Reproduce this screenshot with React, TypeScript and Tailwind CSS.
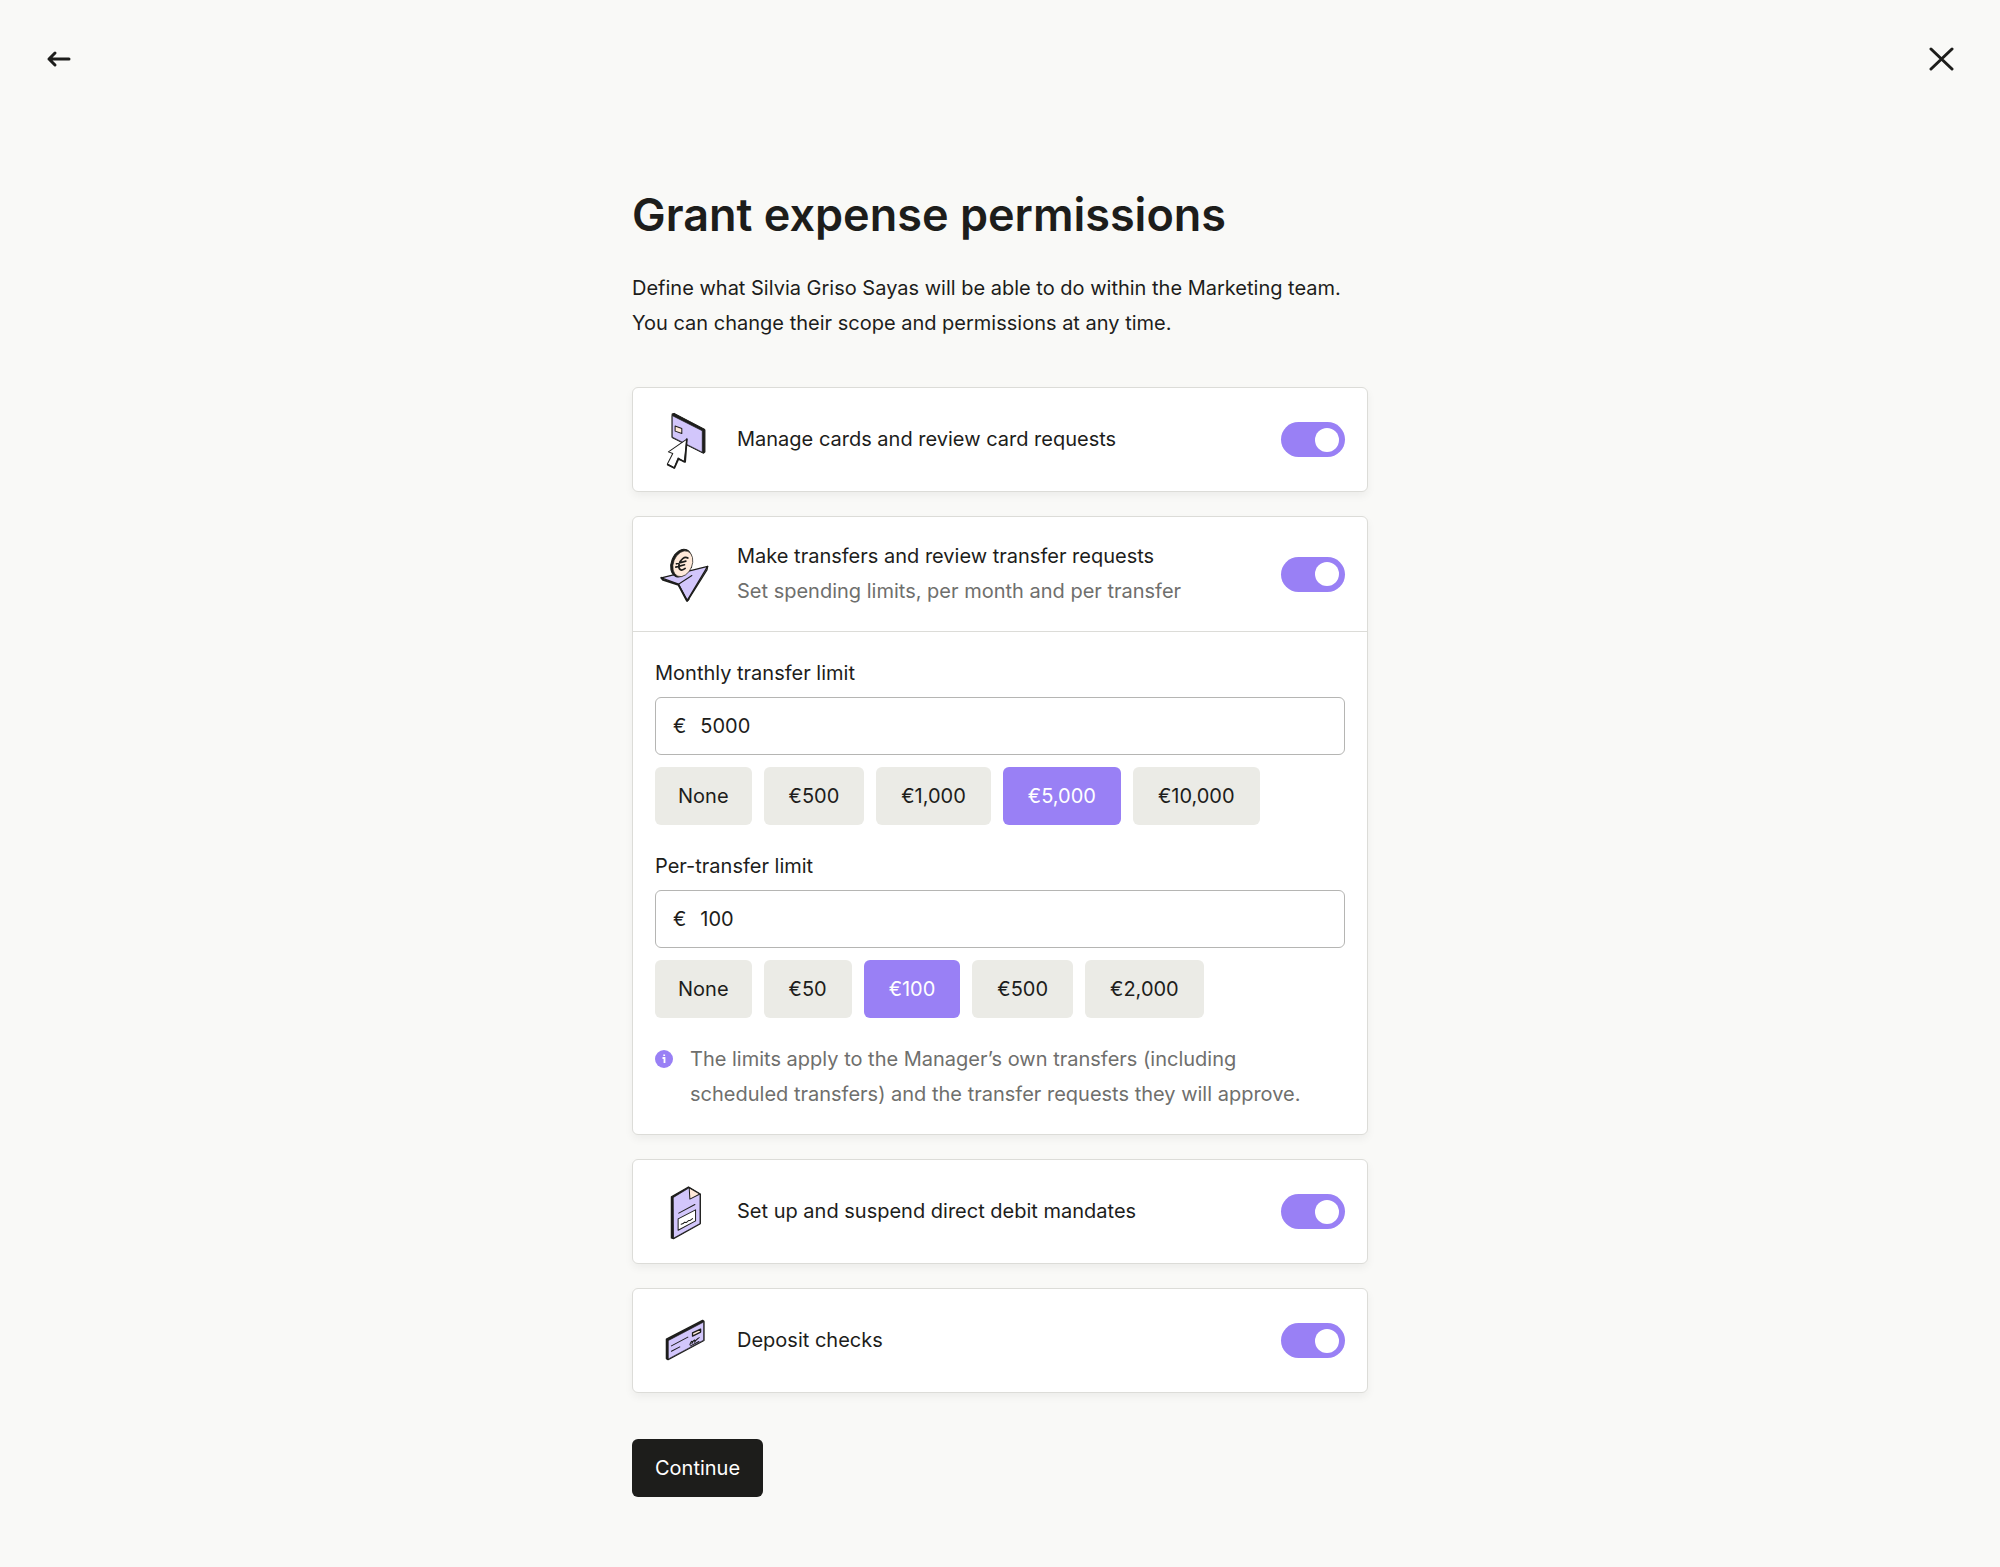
import { useState } from "react";
import type { ReactNode } from "react";

const monthlyOptions = [
    { label: "None", value: "" },
    { label: "€500", value: "500" },
    { label: "€1,000", value: "1000" },
    { label: "€5,000", value: "5000" },
    { label: "€10,000", value: "10000" },
]

const transferOptions = [
    { label: "None", value: "" },
    { label: "€50", value: "50" },
    { label: "€100", value: "100" },
    { label: "€500", value: "500" },
    { label: "€2,000", value: "2000" },
]

/***************** Illustrations ************/
function CardIcon() {
    return (
        <svg className="size-[59px] shrink-0" viewBox="0 0 176 176" fill="none" strokeLinejoin="round" strokeLinecap="round" aria-hidden="true">
            <path d="M51 12 57 10 147 57 149 60V125L145 129 51 82Z" fill="#1d1d1b" stroke="#1d1d1b" strokeWidth="3" />
            <path d="M52 17 141 62V126L52 81Z" fill="#d2c6fb" stroke="#1d1d1b" strokeWidth="2" />
            <path d="M60 48 80 55V70L60 63Z" fill="#ffe9d9" stroke="#1d1d1b" strokeWidth="3" />
            <path d="M95 87 40 125 53 130 37 161 57 173 69 143 87 155Z" fill="#fff" stroke="#1d1d1b" strokeWidth="3" />
            <path d="M95 87 90 155 70 146 58 173 38 163" stroke="#1d1d1b" strokeWidth="5" />
        </svg>
    )
}

function TransferIcon() {
    return (
        <svg className="size-[59px] shrink-0" viewBox="0 0 176 176" fill="none" strokeLinejoin="round" strokeLinecap="round" aria-hidden="true">
            <path d="M19 98 157 64 96 166 70 117Z" fill="#d2c6fb" stroke="#1d1d1b" strokeWidth="4" />
            <path d="M19 98 24 104 70 119 95 166 100 162" stroke="#1d1d1b" strokeWidth="6" />
            <path d="M70 117 110 91" stroke="#1d1d1b" strokeWidth="3" />
            <path d="M157 64 155 74 97 167" stroke="#1d1d1b" strokeWidth="4" />
            <ellipse cx="78" cy="54" rx="29" ry="43" transform="rotate(22 78 54)" fill="#1d1d1b" stroke="#1d1d1b" strokeWidth="3" />
            <ellipse cx="83" cy="56" rx="28" ry="40" transform="rotate(22 83 56)" fill="#ffe9d9" stroke="#1d1d1b" strokeWidth="2" />
            <path d="M98 39C88 33 76 43 72 57C68 73 78 80 90 70M64 56 92 48M62 66 88 59" stroke="#1d1d1b" strokeWidth="5" />
        </svg>
    )
}

function MandateIcon() {
    return (
        <svg className="size-[59px] shrink-0" viewBox="0 0 176 176" fill="none" strokeLinejoin="round" strokeLinecap="round" aria-hidden="true">
            <path d="M49 44 100 15 135 36V124L55 169 49 167Z" fill="#1d1d1b" stroke="#1d1d1b" strokeWidth="4" />
            <path d="M55 46 101 18 134 37V124L56 167Z" fill="#d2c6fb" stroke="#1d1d1b" strokeWidth="2" />
            <path d="M102 17 104 51 134 36Z" fill="#ffe9d9" stroke="#1d1d1b" strokeWidth="3" />
            <path d="M71 93 119 67" stroke="#1d1d1b" strokeWidth="3" />
            <path d="M69 110 121 83V116L69 144Z" fill="#fff" stroke="#1d1d1b" strokeWidth="3" />
            <path d="M78 126 84 124 88 120 93 121 100 115 104 115 112 109" stroke="#1d1d1b" strokeWidth="3" />
        </svg>
    )
}

function CheckIcon() {
    return (
        <svg className="size-[59px] shrink-0" viewBox="0 0 176 176" fill="none" strokeLinejoin="round" strokeLinecap="round" aria-hidden="true">
            <path d="M34 84 142 28 146 31V88L39 145 34 142Z" fill="#1d1d1b" stroke="#1d1d1b" strokeWidth="4" />
            <path d="M40 88 145 33V87L40 143Z" fill="#d2c6fb" stroke="#1d1d1b" strokeWidth="2" />
            <path d="M49 104 98 78M49 120 74 107" stroke="#1d1d1b" strokeWidth="3" />
            <path d="M112 65 136 54V63L112 75Z" fill="#ffe9d9" stroke="#1d1d1b" strokeWidth="4" />
            <path d="M104 101C108 86 114 88 110 97C117 84 121 84 118 93C124 83 128 83 132 79M106 104 131 91" stroke="#1d1d1b" strokeWidth="3" />
        </svg>
    )
}

/***************** Controls ************/
function Toggle({ id }: { id: string }) {
    const [on, setOn] = useState(true)

    return (
        <input
            id={id}
            type="checkbox"
            role="switch"
            checked={on}
            onChange={(e) => { setOn(e.target.checked) }}
            className="flex h-[35px] w-16 shrink-0 cursor-pointer appearance-none items-center rounded-full bg-[#c4c4c0] px-[6px] before:size-6 before:rounded-full before:bg-white checked:justify-end checked:bg-[#9980f5]"
        />
    )
}

type PermissionProps = { id: string, title: string, subtitle?: string, icon: ReactNode, children?: ReactNode }

function Permission({ id, title, subtitle, icon, children }: PermissionProps) {
    return (
        <section className="rounded-md border border-[#dcdcd8] bg-white shadow-[0_4px_8px_rgba(0,0,0,0.05)]">
            <div className="flex items-center gap-[23px] p-[22px]">
                {icon}
                <label htmlFor={id} className="flex-1">
                    <span className="block">{title}</span>
                    {subtitle && <span className="block text-[#6f6f6d]">{subtitle}</span>}
                </label>
                <Toggle id={id} />
            </div>
            {children}
        </section>
    )
}

type LimitProps = { id: string, label: string, initial: string, options: { label: string, value: string }[] }

function LimitField({ id, label, initial, options }: LimitProps) {
    const [value, setValue] = useState(initial)

    return (
        <div>
            <label htmlFor={id} className="block">{label}</label>
            <div className="mt-[6px] flex h-[58px] items-center gap-[14px] rounded-md border border-[#b5b5b3] px-[17px]">
                <span>€</span>
                <input id={id} type="text" value={value} onChange={(e) => { setValue(e.target.value) }} className="w-full min-w-0 flex-1 bg-transparent outline-none" />
            </div>
            <div className="mt-3 flex flex-wrap gap-3">
                {options.map((o) => (
                    <button
                        key={o.label}
                        type="button"
                        onClick={() => { setValue(o.value) }}
                        className={`h-[58px] rounded-md ${o.value ? "px-[25px]" : "px-[23px]"} ${o.value === value ? "bg-[#9980f5] text-white" : "bg-[#ebebe6]"}`}
                    >
                        {o.label}
                    </button>
                ))}
            </div>
        </div>
    )
}

export default function App() {
    return (
        <div className="min-h-screen bg-[#f9f9f7] font-['Inter',sans-serif] text-[20px] leading-[35px] text-[#1d1d1b]">
            <header className="flex items-center justify-between px-[46px] pt-[46px]">
                <button type="button" aria-label="Back">
                    <svg className="size-[26px]" viewBox="0 0 26 26" fill="none" stroke="currentColor" strokeWidth="3" strokeLinecap="round" strokeLinejoin="round">
                        <path d="M23 13H3M9 7 3 13 9 19" />
                    </svg>
                </button>
                <button type="button" aria-label="Close">
                    <svg className="size-[26px]" viewBox="0 0 26 26" fill="none" stroke="currentColor" strokeWidth="3" strokeLinecap="round">
                        <path d="M3 3 24 23M24 3 3 23" />
                    </svg>
                </button>
            </header>

            <main className="mx-auto max-w-[736px] pt-[115px] pb-[68px]">
                <h1 className="text-[45px] leading-[56px] font-semibold">Grant expense permissions</h1>
                <p className="mt-7">
                    Define what Silvia Griso Sayas will be able to do within the Marketing team.
                    <br />
                    You can change their scope and permissions at any time.
                </p>

                <form className="mt-[46px]" onSubmit={(e) => { e.preventDefault() }}>
                    <div className="flex flex-col gap-6">
                        <Permission id="cards" title="Manage cards and review card requests" icon={<CardIcon />} />

                        <Permission id="transfers" title="Make transfers and review transfer requests" subtitle="Set spending limits, per month and per transfer" icon={<TransferIcon />}>
                            <div className="flex flex-col gap-6 border-t border-[#dcdcd8] px-[22px] pt-6 pb-[22px]">
                                <LimitField id="monthly" label="Monthly transfer limit" initial="5000" options={monthlyOptions} />
                                <LimitField id="per-transfer" label="Per-transfer limit" initial="100" options={transferOptions} />
                                <div className="flex gap-[17px] text-[#6f6f6d]">
                                    <svg className="mt-2 size-[18px] shrink-0" viewBox="0 0 18 18" aria-hidden="true">
                                        <circle cx="9" cy="9" r="9" fill="#9980f5" />
                                        <path d="M7.5 8H9.5V13M9.2 4.5V6" stroke="#fff" strokeWidth="1.8" fill="none" />
                                    </svg>
                                    <p>
                                        The limits apply to the Manager’s own transfers (including
                                        <br />
                                        scheduled transfers) and the transfer requests they will approve.
                                    </p>
                                </div>
                            </div>
                        </Permission>

                        <Permission id="mandates" title="Set up and suspend direct debit mandates" icon={<MandateIcon />} />
                        <Permission id="checks" title="Deposit checks" icon={<CheckIcon />} />
                    </div>

                    <button type="submit" className="mt-[46px] h-[58px] rounded-md bg-[#1d1d1b] px-[23px] text-white">Continue</button>
                </form>
            </main>
        </div>
    )
}
